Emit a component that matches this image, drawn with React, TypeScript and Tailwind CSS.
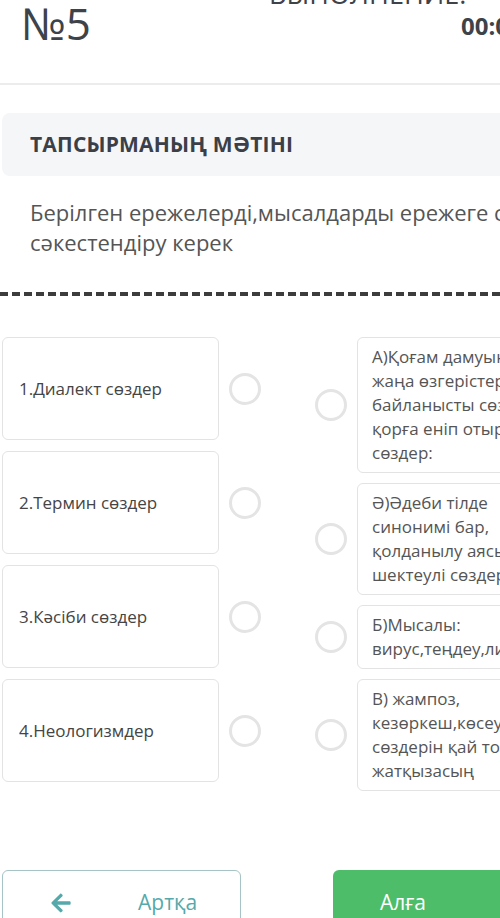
import { FaArrowLeft } from 'react-icons/fa'

const left = ['1.Диалект сөздер', '2.Термин сөздер', '3.Кәсіби сөздер', '4.Неологизмдер']

const right = [
  ['А)Қоғам дамуындағы', 'жаңа өзгерістерге', 'байланысты сөздік', 'қорға еніп отырған', 'сөздер:'],
  ['Ә)Әдеби тілде', 'синонимі бар,', 'қолданылу аясы', 'шектеулі сөздер'],
  ['Б)Мысалы:', 'вирус,теңдеу,лизинг'],
  ['В) жампоз,', 'кезөркеш,көсеукөз', 'сөздерін қай топқа', 'жатқызасың'],
]

function Radio() {
  return <span className="block h-[32px] w-[32px] shrink-0 rounded-full border-[3px] border-[#e4e4e4] bg-white" />
}

export default function App() {
  return (
    <div
      className="h-[918px] w-[500px] overflow-hidden bg-white text-[#454545]"
      style={{ fontFamily: '"Open Sans", "Noto Sans", sans-serif' }}
    >
      <header className="flex h-[85px] w-[700px] border-b-2 border-[#ececec]">
        <div className="pl-[21px] text-[44px] leading-[46px] text-[#3e4249]">№5</div>
        <div className="ml-[178px] flex flex-col">
          <div className="mt-[-22px] text-[27px] leading-[32px] text-[#3e4249]">ВЫПОЛНЕНИЕ:</div>
          <div className="ml-[192px] mt-[-4px] text-[24px] font-bold leading-[40px] text-[#3e4249]">00:00:00</div>
        </div>
      </header>

      <section className="ml-[2px] mt-[28px] flex h-[63px] w-[560px] items-center rounded-lg bg-[#f5f6f8] pl-[28px]">
        <h2 className="text-[21px] font-bold tracking-[0.2px] text-[#3b4048]">ТАПСЫРМАНЫҢ МӘТІНІ</h2>
      </section>

      <p className="mt-[21px] w-[700px] pl-[30px] text-[22px] leading-[30px] text-[#555]">
        Берілген ережелерді,мысалдарды ережеге сәйкес
        <br />
        сәкестендіру керек
      </p>

      <div className="mt-[35px] w-[500px] border-t-[4px] border-dashed border-[#3c3c3c]" />

      <div className="mt-[41px] flex w-[700px]">
        <div className="flex flex-col gap-[11px] pl-[2px]">
          {left.map((t) => (
            <div key={t} className="flex items-center">
              <div className="flex h-[103px] w-[217px] items-center rounded-md border border-[#e3e3e3] pl-[16px] text-[17px]">
                {t}
              </div>
              <div className="ml-[10px]">
                <Radio />
              </div>
            </div>
          ))}
        </div>
        <div className="ml-[54px] flex flex-col gap-[10px]">
          {right.map((lines, i) => (
            <div key={i} className="flex items-center">
              <Radio />
              <div className="ml-[10px] w-[210px] rounded-md border border-[#e3e3e3] px-[14px] py-[7px] text-[17px] leading-[24px] text-[#555]">
                {lines.map((l) => (
                  <div key={l} className="whitespace-nowrap">
                    {l}
                  </div>
                ))}
              </div>
            </div>
          ))}
        </div>
      </div>

      <div className="mt-[79px] flex w-[700px]">
        <button className="ml-[2px] flex h-[66px] w-[239px] items-center rounded-md border border-[#a6c3c5] text-[#56a9aa]">
          <FaArrowLeft className="ml-[47px]" size={22} />
          <span className="ml-[66px] text-[21px]">Артқа</span>
        </button>
        <button className="ml-[92px] flex h-[66px] w-[240px] items-center rounded-md bg-[#4dbd69] pl-[47px] text-[21px] text-white">
          Алға
        </button>
      </div>
    </div>
  )
}
